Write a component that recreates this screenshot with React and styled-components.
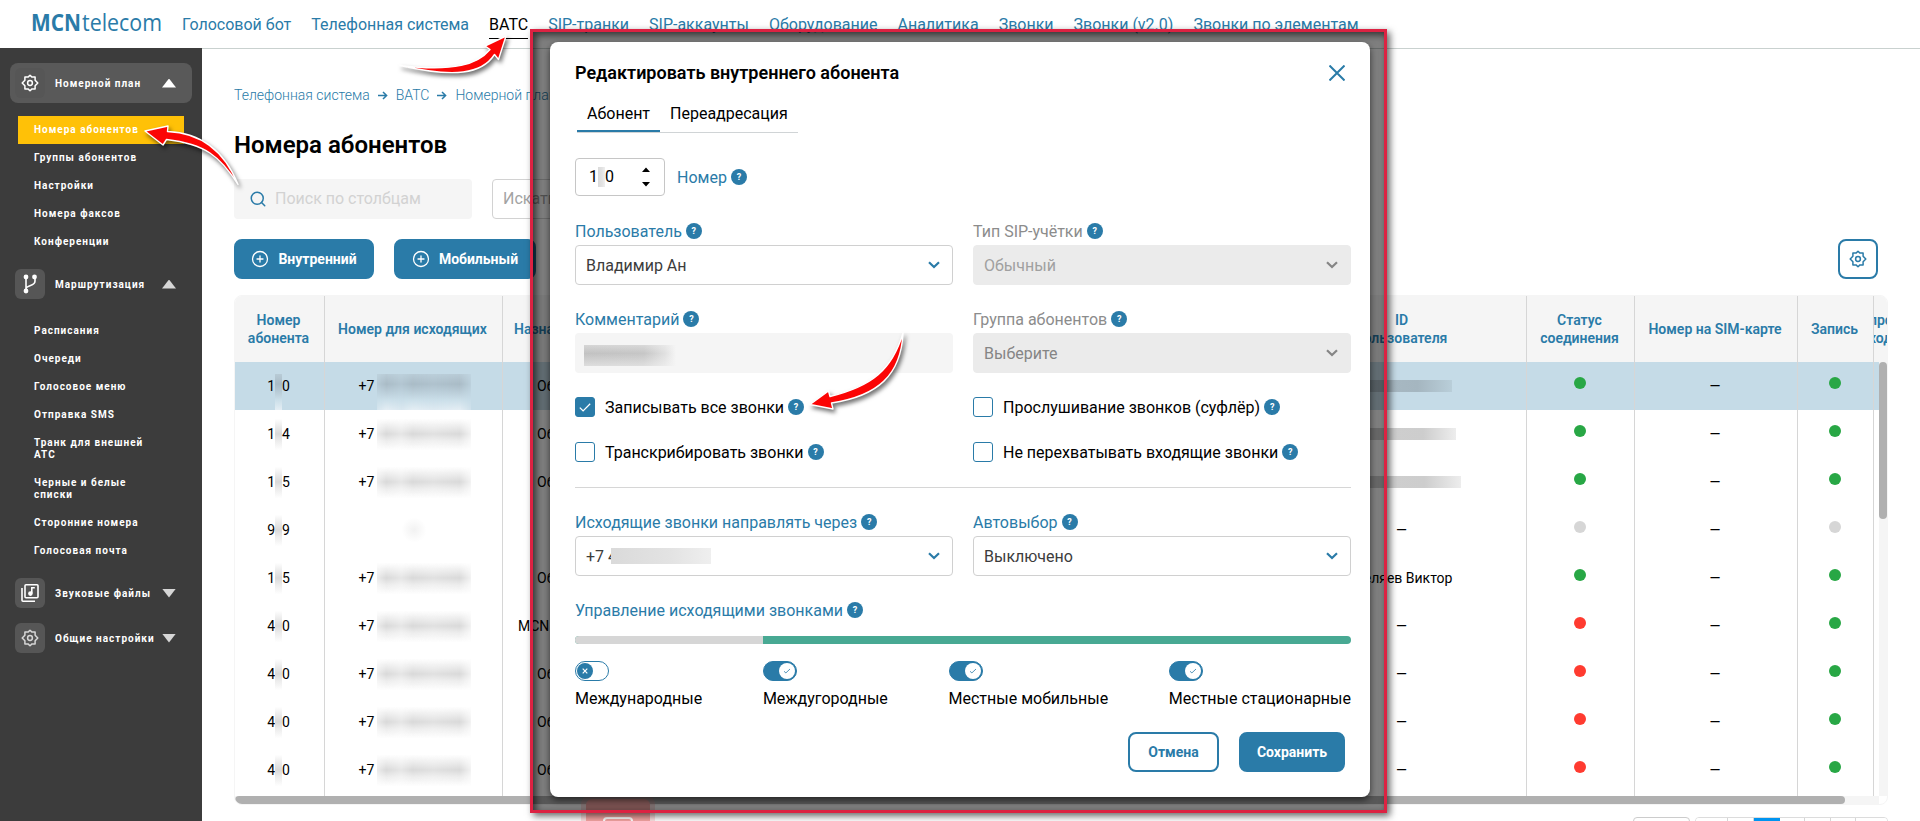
import React, { useState } from 'react'
import styled, { createGlobalStyle } from 'styled-components'
import { LuCirclePlus, LuSearch } from 'react-icons/lu'

const BLUE = '#2a7ba8'

const navItems = [
  'Голосовой бот', 'Телефонная система', 'ВАТС', 'SIP-транки', 'SIP-аккаунты', 'Оборудование',
  'Аналитика', 'Звонки', 'Звонки (v2.0)', 'Звонки по элементам'
]

const menu = [
  {
    title: 'Номерной план', icon: 'gear', open: true, current: true,
    items: ['Номера абонентов', 'Группы абонентов', 'Настройки', 'Номера факсов', 'Конференции']
  },
  {
    title: 'Маршрутизация', icon: 'branch', open: true,
    items: [
      'Расписания', 'Очереди', 'Голосовое меню', 'Отправка SMS', 'Транк для внешней АТС',
      'Черные и белые списки', 'Сторонние номера', 'Голосовая почта'
    ]
  },
  { title: 'Звуковые файлы', icon: 'music', items: [] },
  { title: 'Общие настройки', icon: 'gear', dim: true, items: [] },
]

const rows = [
  { from: '1', to: '0', phone: true, kind: 'Обычный', idWidth: 86, status: 'green', record: 'green' },
  { from: '1', to: '4', phone: true, kind: 'Обычный', idWidth: 94, status: 'green', record: 'green' },
  { from: '1', to: '5', phone: true, kind: 'Обычный', idWidth: 104, status: 'green', record: 'green' },
  { from: '9', to: '9', phone: false, kind: '', id: '—', status: 'grey', record: 'grey' },
  { from: '1', to: '5', phone: true, kind: 'Обычный', id: 'Шеляев Виктор', status: 'green', record: 'green' },
  { from: '4', to: '0', phone: true, kind: 'MCN', id: '—', status: 'red', record: 'green' },
  { from: '4', to: '0', phone: true, kind: 'Обычный', id: '—', status: 'red', record: 'green' },
  { from: '4', to: '0', phone: true, kind: 'Обычный', id: '—', status: 'red', record: 'green' },
  { from: '4', to: '0', phone: true, kind: 'Обычный', id: '—', status: 'red', record: 'green' },
]

const dotColors = { green: '#28a745', red: '#ff3b30', grey: '#d6d6d6' }

function GearIcon({ size = 18 }) {
  return (
    <svg width={size} height={size} viewBox="0 0 18 18" fill="none" stroke="currentColor" strokeWidth="1.5" strokeLinejoin="round">
      <path d="M9 1.200l2 1.900h3.100v3.100L16.800 9l-2.700 2.800v3.100H11l-2 1.900-2-1.900H3.900v-3.100L1.200 9l2.700-2.800V3.100H7z" />
      <circle cx="9" cy="9" r="2.400" />
    </svg>
  )
}

function MenuIcon({ name }) {
  if (name === 'branch') {
    return (
      <svg width="18" height="20" viewBox="0 0 18 20" fill="none" stroke="currentColor" strokeWidth="1.6">
        <path d="M5 3v14M14 4v3q0 3-4.500 4.500T5 15" />
        <circle cx="5" cy="3" r="1.600" fill="currentColor" />
        <circle cx="5" cy="17" r="1.600" fill="currentColor" />
        <circle cx="13.500" cy="3" r="1.600" fill="currentColor" />
      </svg>
    )
  }
  if (name === 'music') {
    return (
      <svg width="20" height="20" viewBox="0 0 20 20" fill="none" stroke="currentColor" strokeWidth="1.600">
        <rect x="5" y="1.800" width="13" height="13" rx="1" />
        <path d="M2 5v12.200q0 1 1 1h12" />
        <path d="M11.800 10.500V4.800h3" />
        <circle cx="10.400" cy="10.600" r="1.500" fill="currentColor" />
      </svg>
    )
  }
  return <GearIcon />
}

function Chevron() {
  return (
    <svg width="12" height="8" viewBox="0 0 12 8" fill="none" stroke="currentColor" strokeWidth="2.200">
      <path d="M1 1.200l5 4.800 5-4.800" />
    </svg>
  )
}

function CrumbArrow() {
  return (
    <svg width="10" height="9" viewBox="0 0 10 9" fill="none" stroke={BLUE} strokeWidth="1.500">
      <path d="M0 4.500h8.500M5 1l3.600 3.500L5 8" />
    </svg>
  )
}

function Field({ label, disabled, children }) {
  return (
    <FieldBox>
      <Label disabled={disabled}>{label} <Help>?</Help></Label>
      {children}
    </FieldBox>
  )
}

function Check({ label, initial = false }) {
  const [checked, setChecked] = useState(initial)
  return (
    <CheckRow onClick={() => setChecked(!checked)}>
      <CheckBox $checked={checked}>
        {checked && (
          <svg width="12" height="9" viewBox="0 0 12 9" fill="none" stroke="#fff" strokeWidth="1.300">
            <path d="M.8 4.600l3.300 3.300L11.200.8" />
          </svg>
        )}
      </CheckBox>
      <span>{label}</span>
      <Help>?</Help>
    </CheckRow>
  )
}

function Toggle({ label, initial = true }) {
  const [on, setOn] = useState(initial)
  return (
    <ToggleBox onClick={() => setOn(!on)}>
      <Track $on={on}>
        <Knob $on={on}>
          <svg width="6" height="6" viewBox="0 0 6 6" fill="none" stroke="currentColor" strokeWidth={on ? 0.8 : 1.2}>
            <path d={on ? 'M0 3.300l1.900 1.600L6 1' : 'M.7.7l4.600 4.600M5.300.7L.7 5.300'} />
          </svg>
        </Knob>
      </Track>
      {label}
    </ToggleBox>
  )
}

function Sidebar() {
  return (
    <Side>
      {menu.map(group => (
        <div key={group.title}>
          <GroupHead $current={group.current}>
            <GroupIcon $dim={group.dim}><MenuIcon name={group.icon} /></GroupIcon>
            <GroupTitle>{group.title}</GroupTitle>
            <Triangle $open={group.open} $current={group.current} />
          </GroupHead>
          {group.items.length > 0 && (
            <SubList>
              {group.items.map(item => (
                <SubItem key={item} $active={item === 'Номера абонентов'}>{item}</SubItem>
              ))}
            </SubList>
          )}
        </div>
      ))}
    </Side>
  )
}

function SubscribersTable() {
  return (
    <Table>
      <HeadRow>
        <HeadCell>Номер абонента</HeadCell>
        <HeadCell>Номер для исходящих</HeadCell>
        <HeadCell $left>Назначение</HeadCell>
        <HeadCell>ID<br />пользователя</HeadCell>
        <HeadCell>Статус соединения</HeadCell>
        <HeadCell>Номер на SIM-карте</HeadCell>
        <HeadCell>Запись</HeadCell>
        <HeadCell $clip><span>прос<br />ходя</span></HeadCell>
      </HeadRow>
      <TableBody>
        <div>
          {rows.map((row, i) => (
            <Row key={i} $selected={i === 0}>
              <Cell>
                {row.from}<Smudge $w={7} $first={i === 0} />{row.to}
              </Cell>
              <Cell>
                {row.phone ? <><PlusSeven>+7</PlusSeven><Smudge $w={94} $wide $first={i === 0} /></> : <Speck />}
              </Cell>
              <Cell $left $wide={row.kind === 'MCN'}>{row.kind}</Cell>
              <Cell>{row.id || <NameSmudge $w={row.idWidth} $first={i === 0} />}</Cell>
              <Cell><Dot color={dotColors[row.status]} /></Cell>
              <Cell>—</Cell>
              <Cell><Dot color={dotColors[row.record]} /></Cell>
              <Cell />
            </Row>
          ))}
        </div>
        <ScrollY><ThumbY /></ScrollY>
      </TableBody>
      <ScrollX><ThumbX /></ScrollX>
    </Table>
  )
}

function EditDialog() {
  return (
    <Dialog>
      <DialogHead>
        <DialogTitle>Редактировать внутреннего абонента</DialogTitle>
        <svg width="16" height="16" viewBox="0 0 16 16" stroke={BLUE} strokeWidth="2">
          <path d="M.5.5l15 15M15.500.5l-15 15" />
        </svg>
      </DialogHead>

      <Tabs>
        <Tab $active>Абонент</Tab>
        <Tab>Переадресация</Tab>
      </Tabs>

      <NumberRow>
        <NumberInput>
          <span>1</span><InputSmudge $w={7} $h={20} /><span>0</span>
          <svg width="8" height="20" viewBox="0 0 8 20" fill="#000">
            <path d="M0 5l4-4.500L8 5zM0 15h8l-4 4.500z" />
          </svg>
        </NumberInput>
        <Label>Номер <Help>?</Help></Label>
      </NumberRow>

      <FieldGrid>
        <Field label="Пользователь">
          <Select>Владимир Ан<Chevron /></Select>
        </Field>
        <Field label="Тип SIP-учётки" disabled>
          <Select $disabled>Обычный<Chevron /></Select>
        </Field>
        <Field label="Комментарий">
          <Comment><InputSmudge $w={92} $h={21} $fade /></Comment>
        </Field>
        <Field label="Группа абонентов" disabled>
          <Select $disabled $placeholder>Выберите<Chevron /></Select>
        </Field>
      </FieldGrid>

      <CheckGrid>
        <Check label="Записывать все звонки" initial />
        <Check label="Прослушивание звонков (суфлёр)" />
        <Check label="Транскрибировать звонки" />
        <Check label="Не перехватывать входящие звонки" />
      </CheckGrid>

      <Divider />

      <FieldGrid>
        <Field label="Исходящие звонки направлять через">
          <Select><Masked>+7 4<InputSmudge $w={100} $h={16} /></Masked><Chevron /></Select>
        </Field>
        <Field label="Автовыбор">
          <Select>Выключено<Chevron /></Select>
        </Field>
      </FieldGrid>

      <Label>Управление исходящими звонками <Help>?</Help></Label>
      <Bar><BarOff /></Bar>
      <Toggles>
        <Toggle label="Международные" initial={false} />
        <Toggle label="Междугородные" />
        <Toggle label="Местные мобильные" />
        <Toggle label="Местные стационарные" />
      </Toggles>

      <Actions>
        <Button $outline $w={91}>Отмена</Button>
        <Button $w={106}>Сохранить</Button>
      </Actions>
    </Dialog>
  )
}

export default function App() {
  return (
    <Screen>
      <GlobalStyle />
      <Header>
        <svg width="132" height="46" viewBox="0 0 132 46" fill={BLUE}>
          <text x="0" y="30" fontFamily="'Open Sans', sans-serif" fontSize="22.500" fontWeight="700" textLength="50" lengthAdjust="spacingAndGlyphs">MCN</text>
          <text x="51" y="30" fontFamily="'Open Sans', sans-serif" fontSize="23" textLength="80" lengthAdjust="spacingAndGlyphs">telecom</text>
        </svg>
        <Nav>
          {navItems.map(item => <NavLink key={item} $active={item === 'ВАТС'}>{item}</NavLink>)}
        </Nav>
      </Header>

      <Body>
        <Sidebar />
        <Main>
          <Crumbs>
            Телефонная система <CrumbArrow /> ВАТС <CrumbArrow /> Номерной план
          </Crumbs>
          <Title>Номера абонентов</Title>
          <Filters>
            <Search><LuSearch size={18} color={BLUE} />Поиск по столбцам</Search>
            <Find>Искать</Find>
          </Filters>
          <Toolbar>
            <Button $w={140}><LuCirclePlus size={18} strokeWidth={1.7} />Внутренний</Button>
            <Button $w={142}><LuCirclePlus size={18} strokeWidth={1.7} />Мобильный</Button>
            <SettingsButton><GearIcon /></SettingsButton>
          </Toolbar>
          <SubscribersTable />
          <Pager>
            <PageSize />
            <Pages>
              <Page $w={32} /><Page $w={26} /><Page $w={26} $active /><Page $w={25} /><Page $w={26} /><Page $w={25} /><Page $w={31} />
            </Pages>
          </Pager>
        </Main>
      </Body>

      <ChatButton><ChatIcon /></ChatButton>

      <Frame>
        <EditDialog />
      </Frame>

      <Marks width="1920" height="821" viewBox="0 0 1920 821">
        <path d="M506 36L485 46l5 3.500C478 64 455 72 400 65.500 455 78 482 74 494.500 54.500l4 5z" />
        <path d="M145 131l23-5-.5 5.500C205 133 226 155 238 184.500 220 156 205 144 166.500 139.500L163 145z" />
        <path d="M810 404.500L828.500 391l1.500 5.500C872 386 892 370 903 333 901 375 878 396 831.500 403l1.500 6z" />
      </Marks>
    </Screen>
  )
}

const GlobalStyle = createGlobalStyle`
  * { box-sizing: border-box; }
  body {
    margin: 0;
    background: #fff;
    color: #000;
    font-family: Roboto, sans-serif;
    font-size: 16px;
  }
  svg { display: block; flex: none; }
`

const Screen = styled.div`
  position: relative;
  width: 1920px;
  height: 821px;
  overflow: hidden;
`

const Header = styled.header`
  display: flex;
  align-items: center;
  height: 49px;
  padding-left: 31px;
  border-bottom: 1px solid #c9d1cf;
`

const Nav = styled.nav`
  display: flex;
  gap: 20px;
  margin-left: 19px;
`

const NavLink = styled.a`
  height: 30px;
  padding-top: 1px;
  line-height: 30px;
  white-space: nowrap;
  color: ${p => p.$active ? '#000' : BLUE};
  border-bottom: 1px solid ${p => p.$active ? '#000' : 'transparent'};
`

const Body = styled.div`
  display: flex;
  height: 772px;
`

const Side = styled.aside`
  width: 202px;
  flex: none;
  margin-top: -1px;
  padding: 15px 10px 0;
  background: #3c3c3c;
  color: #fff;
  font-size: 10px;
  font-weight: 700;
  letter-spacing: 1px;
`

const GroupHead = styled.div`
  display: flex;
  align-items: center;
  height: 40px;
  margin-bottom: 5px;
  padding: 0 16px 0 5px;
  border-radius: 8px;
  background: ${p => p.$current ? '#595959' : 'transparent'};
`

const GroupIcon = styled.span`
  display: flex;
  align-items: center;
  justify-content: center;
  width: 30px;
  height: 30px;
  border-radius: 6px;
  background: #565656;
  color: ${p => p.$dim ? '#d6d6d6' : '#fff'};
`

const GroupTitle = styled.span`
  flex: 1;
  margin-left: 10px;
  white-space: nowrap;
`

const Triangle = styled.i`
  width: 14px;
  height: 9px;
  background: ${p => p.$current ? '#fff' : '#d6d6d6'};
  clip-path: ${p => p.$open ? 'polygon(50% 0, 100% 100%, 0 100%)' : 'polygon(0 0, 100% 0, 50% 100%)'};
`

const SubList = styled.div`
  padding: 8px 8px 8px;
`

const SubItem = styled.div`
  padding: 8px 34px 8px 16px;
  line-height: 12px;
  background: ${p => p.$active ? '#ffc107' : 'transparent'};
  white-space: ${p => p.$active ? 'nowrap' : 'normal'};
`

const Main = styled.main`
  width: 1686px;
  padding: 36px 0 0 32px;
`

const Crumbs = styled.div`
  display: flex;
  align-items: center;
  gap: 8px;
  height: 20px;
  color: ${BLUE};
  font-size: 14px;
  font-weight: 300;
`

const Title = styled.h1`
  margin: 24px 0 0;
  font-size: 24px;
  line-height: 32px;
  font-weight: 600;
`

const Filters = styled.div`
  display: flex;
  gap: 20px;
  margin-top: 18px;
`

const Search = styled.div`
  display: flex;
  align-items: center;
  gap: 8px;
  width: 238px;
  height: 40px;
  padding: 0 0 1px 15px;
  border-radius: 4px;
  background: #f5f5f5;
  color: #d2d2d2;
`

const Find = styled.div`
  width: 238px;
  height: 40px;
  padding-left: 10px;
  border: 1px solid #d2d2d2;
  border-radius: 4px;
  line-height: 37px;
  color: #a3a3a3;
`

const Toolbar = styled.div`
  display: flex;
  gap: 20px;
  margin-top: 20px;
  padding-right: 10px;
`

const Button = styled.button`
  display: flex;
  align-items: center;
  justify-content: center;
  gap: 9px;
  width: ${p => p.$w}px;
  height: 40px;
  padding: 0;
  border: 2px solid ${BLUE};
  border-radius: 8px;
  background: ${p => p.$outline ? '#fff' : BLUE};
  color: ${p => p.$outline ? BLUE : '#fff'};
  font: 700 14px Roboto, sans-serif;
`

const SettingsButton = styled(Button)`
  width: 40px;
  margin-left: auto;
  background: #fff;
  color: ${BLUE};
`

const Table = styled.div`
  width: 1654px;
  height: 510px;
  margin-top: 16px;
  border: 1px solid #f5f5f5;
  border-radius: 8px;
  overflow: hidden;
`

const HeadRow = styled.div`
  display: grid;
  grid-template-columns: 90px 178px 776px 248px 108px 163px 76px 13px;
  height: 66px;
  background: #f5f5f5;
`

const HeadCell = styled.div`
  display: flex;
  align-items: center;
  justify-content: ${p => p.$left || p.$clip ? 'flex-start' : 'center'};
  padding: 0 13px 1px 11px;
  border-right: 1px solid #d6d6d6;
  overflow: hidden;
  color: ${BLUE};
  font-size: 14px;
  font-weight: 600;
  line-height: 18px;
  text-align: center;
  &:nth-child(3) { border-color: transparent; }
  &:last-child {
    padding: 0 0 1px;
    border: 0;
  }
  span { margin-left: -5px; text-align: left; }
`

const TableBody = styled.div`
  display: flex;
  height: 434px;
  overflow: hidden;
`

const Row = styled.div`
  display: grid;
  grid-template-columns: 90px 178px 776px 248px 108px 163px 76px 5px;
  height: 48px;
  background: ${p => p.$selected ? '#c5dbe7' : '#fff'};
  &:last-child { height: 50px; }
`

const Cell = styled.div`
  display: flex;
  align-items: center;
  justify-content: ${p => p.$left ? 'flex-start' : 'center'};
  height: 48px;
  padding: 0 2px 1px ${p => p.$left ? (p.$wide ? 15 : 34) : 0}px;
  border-right: 1px solid #d6d6d6;
  font-size: 14px;
  white-space: nowrap;
  ${Row}:last-child & {
    height: 50px;
    padding-bottom: 3px;
  }
  &:nth-child(2) { padding-right: 0; }
  &:nth-child(3) { border-color: transparent; }
  &:last-child { padding: 0; border: 0; }
`

const PlusSeven = styled.span`
  margin-left: 3px;
  margin-right: 3px;
`

/* blurred out digits */
const Smudge = styled.i`
  align-self: stretch;
  width: ${p => p.$w}px;
  margin: ${p => p.$first ? 12 : 0}px 0 -1px;
  background: ${p => p.$first
    ? 'linear-gradient(#b8cbd6 0%, #a9bbc6 28%, #b9ccd7 50%, #cbdfe9 72%, #e4eef4 100%)'
    : 'linear-gradient(#fff0 18%, #ececec 34%, #d9d9d9 50%, #ececec 64%, #fff0 84%)'};
  mask-image: ${p => p.$wide
    ? 'linear-gradient(90deg, #0008 0, #000 10%, #000a 26%, #000 38%, #000c 60%, #000 88%, #0005 100%)'
    : 'none'};
`

const Speck = styled.i`
  width: 26px;
  height: 26px;
  background: radial-gradient(#f2f2f2, #fff 68%);
`

const NameSmudge = styled.i`
  width: ${p => p.$w}px;
  height: 12px;
  margin-left: 15px;
  background: ${p => p.$first
    ? 'linear-gradient(90deg, #a9bac4, #a5b6c0 60%, #b9ced9)'
    : 'linear-gradient(90deg, #cfcfcf, #cdcdcd 65%, #ededed)'};
`

const Dot = styled.i`
  width: 12px;
  height: 12px;
  margin-top: -5px;
  border-radius: 50%;
  background: ${p => p.color};
`

const ScrollY = styled.div`
  width: 8px;
  background: #f5f5f5;
`

const ThumbY = styled.div`
  height: 157px;
  border-radius: 4px;
  background: #b0b0b0;
`

const ScrollX = styled.div`
  width: 1644px;
  height: 8px;
  background: #f5f5f5;
`

const ThumbX = styled.div`
  width: 1610px;
  height: 8px;
  border-radius: 4px;
  background: #b0b0b0;
`

const Pager = styled.div`
  display: flex;
  justify-content: flex-end;
  gap: 5px;
  margin-top: 12px;
`

const PageSize = styled.div`
  width: 57px;
  height: 30px;
  border: 1px solid #ccc;
  border-radius: 4px;
`

const Pages = styled.div`
  display: flex;
  height: 30px;
  border: 1px solid #dcdcdc;
  border-radius: 4px;
  overflow: hidden;
`

const Page = styled.div`
  width: ${p => p.$w}px;
  border-right: 1px solid ${p => p.$active ? '#0094f0' : '#d6d6d6'};
  background: ${p => p.$active ? '#0094f0' : '#fff'};
  &:last-child { border: 0; }
`

const ChatButton = styled.div`
  position: absolute;
  left: 586px;
  top: 799px;
  display: flex;
  justify-content: center;
  width: 64px;
  height: 64px;
  padding-top: 18px;
  border-radius: 6px;
  background: #f4a4a2;
  box-shadow: 0 0 0 5px rgba(244, 164, 162, 0.35);
`

const ChatIcon = styled.div`
  width: 30px;
  height: 24px;
  border: 2px solid #fff;
  border-radius: 4px;
`

/* dimmed area around the dialog with its red outline */
const Frame = styled.div`
  position: absolute;
  left: 530px;
  top: 29px;
  width: 857px;
  height: 784px;
  padding: 10px 14px 0 17px;
  border: 3px solid #dc2242;
  background: rgba(0, 0, 0, 0.5);
  background-clip: padding-box;
  box-shadow: 3px 3px 7px rgba(0, 0, 0, 0.6), inset 3px 3px 7px rgba(0, 0, 0, 0.6);
`

const Dialog = styled.section`
  height: 755px;
  padding: 15px 19px 0 25px;
  border-radius: 8px;
  background: #fff;
  box-shadow: 0 3px 7px rgba(0, 0, 0, 0.6);
`

const DialogHead = styled.div`
  display: flex;
  align-items: center;
  justify-content: space-between;
  height: 30px;
  padding-right: 6px;
  svg { margin-top: 2px; }
`

const DialogTitle = styled.h2`
  margin: 0;
  font-size: 18px;
  font-weight: 600;
`

const Tabs = styled.div`
  display: flex;
  width: fit-content;
  height: 38px;
  margin: 8px 0 0 2px;
  border-bottom: 1px solid #d0d4d6;
`

const Tab = styled.div`
  padding: 0 10px;
  line-height: 38px;
  border-bottom: ${p => p.$active ? `2px solid ${BLUE}` : 0};
`

const NumberRow = styled.div`
  display: flex;
  align-items: center;
  gap: 12px;
  margin-top: 25px;
`

const NumberInput = styled.div`
  display: flex;
  align-items: center;
  width: 90px;
  height: 38px;
  padding: 0 14px 1px 13px;
  border: 1px solid #c6c6c6;
  border-radius: 4px;
  svg { margin-left: auto; }
`

const FieldGrid = styled.div`
  display: grid;
  grid-template-columns: 378px 378px;
  gap: 24px 20px;
  margin: 25px 0 24px;
  hr + & { margin-top: 24px; }
`

const FieldBox = styled.div`
  display: flex;
  flex-direction: column;
  gap: 4px;
`

const Label = styled.div`
  display: flex;
  align-items: center;
  gap: 4px;
  height: 20px;
  color: ${p => p.disabled ? '#8c8c8c' : BLUE};
`

const Help = styled.i`
  display: inline-flex;
  align-items: center;
  justify-content: center;
  width: 16px;
  height: 16px;
  border-radius: 50%;
  background: ${BLUE};
  color: #fff;
  font: 700 9px Roboto, sans-serif;
`

const Select = styled.div`
  display: flex;
  align-items: center;
  justify-content: space-between;
  height: 40px;
  padding: 0 12px 0 10px;
  border: 1px solid ${p => p.$disabled ? '#ebebeb' : '#d0d0d0'};
  border-radius: 4px;
  background: ${p => p.$disabled ? '#ebebeb' : '#fff'};
  color: ${p => p.$disabled ? (p.$placeholder ? '#858585' : '#a0a0a0') : '#3c3c3c'};
  svg { color: ${p => p.$disabled ? '#858585' : BLUE}; }
`

const Comment = styled.div`
  height: 40px;
  padding: 12px 9px;
  border-radius: 4px;
  background: #f5f5f5;
`

const InputSmudge = styled.i`
  display: inline-block;
  width: ${p => p.$w}px;
  height: ${p => p.$h}px;
  background: ${p => p.$fade
    ? 'linear-gradient(#f5f5f566, #f5f5f500 40%, #f5f5f588), linear-gradient(90deg, #c2c2c2, #c6c6c6 65%, #e0e0e0 88%, #f5f5f5)'
    : 'linear-gradient(90deg, #dadada, #e3e3e3 60%, #efefef)'};
`

const Masked = styled.span`
  display: flex;
  align-items: center;
  ${InputSmudge} { margin-left: -6px; }
`

const CheckGrid = styled.div`
  display: grid;
  grid-template-columns: 398px 378px;
  row-gap: 25px;
`

const CheckRow = styled.div`
  display: flex;
  align-items: center;
  height: 20px;
  ${Help} { margin-left: 4px; }
`

const CheckBox = styled.span`
  display: flex;
  align-items: center;
  justify-content: center;
  width: 20px;
  height: 20px;
  margin-right: 10px;
  border: 1px solid ${BLUE};
  border-radius: 3px;
  background: ${p => p.$checked ? BLUE : '#fff'};
`

const Divider = styled.hr`
  height: 1px;
  margin: 25px 0 0;
  border: 0;
  background: #d6d6d6;
`

const Bar = styled.div`
  height: 8px;
  margin-top: 16px;
  border-radius: 4px;
  background: #48a993;
  overflow: hidden;
`

const BarOff = styled.div`
  width: 188px;
  height: 8px;
  background: #d6d6d6;
`

const Toggles = styled.div`
  display: flex;
  justify-content: space-between;
  margin-top: 17px;
`

const ToggleBox = styled.div`
  line-height: 20px;
`

const Track = styled.div`
  display: flex;
  align-items: center;
  justify-content: ${p => p.$on ? 'flex-end' : 'flex-start'};
  width: 34px;
  height: 20px;
  margin-bottom: 8px;
  padding: 0 1px;
  border: 1px solid ${BLUE};
  border-radius: 10px;
  background: ${p => p.$on ? BLUE : '#fff'};
`

const Knob = styled.div`
  display: flex;
  align-items: center;
  justify-content: center;
  width: 16px;
  height: 16px;
  border-radius: 50%;
  background: ${p => p.$on ? '#fff' : BLUE};
  color: ${p => p.$on ? BLUE : '#fff'};
`

const Actions = styled.div`
  display: flex;
  justify-content: flex-end;
  gap: 20px;
  margin-top: 23px;
  padding-right: 6px;
`

const Marks = styled.svg`
  position: absolute;
  left: 0;
  top: 0;
  pointer-events: none;
  fill: #fb0505;
  stroke: #fff;
  stroke-width: 1.4px;
  stroke-linejoin: round;
  filter: drop-shadow(2px 3px 2px rgba(0, 0, 0, 0.55));
`
